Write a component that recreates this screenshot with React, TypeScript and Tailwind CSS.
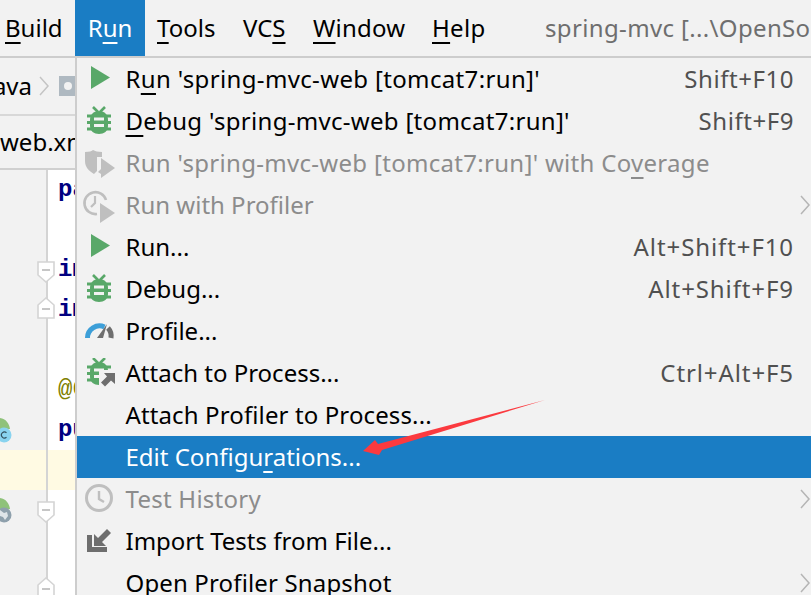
import type { ReactNode } from "react";

const GREEN = "#59a869";
const GRAY = "#bfbfbf";

function PlayIcon() {
  return (
    <svg width="30" height="30" viewBox="0 0 30 30">
      <polygon points="6,2 25,13.500 6,25" fill={GREEN} />
    </svg>
  );
}

function BugIcon({ attach }: { attach?: boolean }) {
  return (
    <svg width="30" height="30" viewBox="0 0 30 30">
      <g transform={attach ? "translate(0,-1)" : undefined}>
        <path d="M8 1l5 5M20 1l-5 5" stroke={GREEN} strokeWidth="2.600" fill="none" />
        <path d="M2 10h24M2 16.500h24M2 23h24" stroke={GREEN} strokeWidth="3.200" />
        <path d="M14 5c6 0 9 4 9 9v6c0 5-4 8-9 8s-9-3-9-8v-6c0-5 3-9 9-9z" fill={GREEN} />
        <path d="M9 13h10M9 19.500h10" stroke="#f2f2f2" strokeWidth="2.800" />
      </g>
      {attach && (
        <>
          <rect x="14" y="12" width="16" height="18" fill="#f2f2f2" />
          <path d="M19 15h11v11l-4-3.500-6 6-4-4 6-6z" fill="#6e6e6e" />
        </>
      )}
    </svg>
  );
}

function CoverageIcon() {
  return (
    <svg width="30" height="30" viewBox="0 0 30 30">
      <path d="M0 4c4 0 7-1 8-2 2 1 5 2 9 2v5h-5v14l-3 3c-5-3-9-7-9-13z" fill={GRAY} />
      <path d="M13 24l3-3v5z" fill={GRAY} />
      <polygon points="16,10 30,20 16,30" fill={GRAY} />
    </svg>
  );
}

function ProfilerIcon() {
  return (
    <svg className="overflow-visible" width="30" height="30" viewBox="0 0 30 30">
      <path d="M21 10a11 11 0 1 0-9 14" stroke={GRAY} strokeWidth="2.600" fill="none" />
      <path d="M10 6v7l-4 4" stroke={GRAY} strokeWidth="2.200" fill="none" />
      <polygon points="15,13 30,23 15,33" fill={GRAY} />
    </svg>
  );
}

function GaugeIcon() {
  return (
    <svg width="30" height="30" viewBox="0 0 30 30">
      <path d="M2.500 22a12 12 0 0 1 17-11" stroke="#3d9fd8" strokeWidth="5" fill="none" />
      <path d="M23 12a12 12 0 0 1 3 10" stroke="#6e6e6e" strokeWidth="5" fill="none" />
      <path d="M22 8l-4 14h-6z" fill="#6e6e6e" />
    </svg>
  );
}

function ClockIcon() {
  return (
    <svg width="30" height="30" viewBox="0 0 30 30">
      <circle cx="14" cy="14" r="12.500" stroke={GRAY} strokeWidth="3" fill="none" />
      <path d="M14 7v8l5 3" stroke={GRAY} strokeWidth="2.400" fill="none" />
    </svg>
  );
}

function ImportIcon() {
  return (
    <svg width="30" height="30" viewBox="0 0 30 30">
      <path d="M2 9h5v12h15v5H2z" fill="#6e6e6e" />
      <path d="M9 8l4 4 9-9 4 4-9 9 4 4H9z" fill="#6e6e6e" />
    </svg>
  );
}

function Chevron({ color = "#b5b5b5" }: { color?: string }) {
  return (
    <svg width="10" height="20" viewBox="0 0 10 20">
      <path d="M1 1l8 9-8 9" stroke={color} strokeWidth="1.500" fill="none" />
    </svg>
  );
}

function U({ children }: { children: ReactNode }) {
  return <span className="underline decoration-2 underline-offset-[5px] [text-decoration-skip-ink:none]">{children}</span>;
}

function Row({ icon, children, shortcut, sub, disabled, active, textClass = "", keyClass = "" }: {
  icon?: ReactNode;
  children: ReactNode;
  shortcut?: string;
  sub?: boolean;
  disabled?: boolean;
  active?: boolean;
  textClass?: string;
  keyClass?: string;
}) {
  return (
    <div className={`flex h-[42px] shrink-0 items-center ${active ? "bg-[#1a7dc4] text-white" : disabled ? "text-[#8c8c8c]" : "text-black"}`}>
      <div className="flex w-[48.500px] shrink-0 items-center pl-[8px]">{icon}</div>
      <div className={`flex-1 whitespace-nowrap ${textClass}`}>{children}</div>
      {shortcut && <div className={`mr-[17px] whitespace-nowrap text-[#505050] ${keyClass}`}>{shortcut}</div>}
      {sub && <div className="mr-[1px] flex items-center"><Chevron /></div>}
    </div>
  );
}

function FoldMark({ up }: { up?: boolean }) {
  return (
    <svg className={`absolute left-[37px] top-1/2 ${up ? "-mt-[13px]" : "-mt-[9px]"}`} width="18" height="22" viewBox="0 0 18 22">
      <path
        d={up ? "M1 8l8-7 8 7v13H1z" : "M1 1h16v13l-8 7-8-7z"}
        fill="#fff"
        stroke="#d4d4d4"
        strokeWidth="1.600"
      />
      <path d={up ? "M5 12h8" : "M5 9h8"} stroke="#b8b8b8" strokeWidth="1.600" />
    </svg>
  );
}

function GutterIcon({ globe }: { globe?: boolean }) {
  return (
    <svg className="absolute left-0 top-[8px]" width="12" height="26" viewBox="0 0 12 26">
      <path d="M0 0c6 1 9 5 10 11H0z" fill="#8fc27a" />
      <circle cx="4" cy="17" r="7.500" fill={globe ? "#8ea0ac" : "#89d3ef"} />
      {globe ? (
        <path d="M0 12l4 3 3-1 1 4-3 4-2-3-3-1z" fill="#dfe5e9" />
      ) : (
        <path d="M6.500 14.800a3 3 0 1 0 0 4.400" stroke="#33525f" strokeWidth="1.200" fill="none" />
      )}
    </svg>
  );
}

function CodeRow({ children, mark, up, icon, globe, highlight }: {
  children?: ReactNode;
  mark?: boolean;
  up?: boolean;
  icon?: boolean;
  globe?: boolean;
  highlight?: boolean;
}) {
  return (
    <div className={`relative flex h-[40px] shrink-0 ${highlight ? "bg-[#fffae3]" : ""}`}>
      <div className="w-[48px] shrink-0 border-r-2 border-[#d4d4d4]" />
      <div className={`flex flex-1 items-center pl-[10px] font-['Liberation_Mono',monospace] text-[24px] font-bold ${highlight ? "" : "bg-white"}`}>
        {children}
      </div>
      {mark && <FoldMark up={up} />}
      {icon && <GutterIcon globe={globe} />}
    </div>
  );
}

export default function App() {
  return (
    <div className="relative flex h-[595px] w-[811px] flex-col overflow-hidden bg-[#f2f2f2] font-['Noto_Sans',sans-serif] text-[24px] leading-none">
      {/* menu bar */}
      <div className="flex h-[58px] shrink-0 items-center overflow-hidden whitespace-nowrap border-b-2 border-[#cdcdcd] text-black">
        <div className="w-[75px] shrink-0 pl-[5px]"><U>B</U>uild</div>
        <div className="flex h-full w-[70px] shrink-0 items-center justify-center bg-[#1a7dc4] text-white">R<U>u</U>n</div>
        <div className="ml-[12px] w-[86px] shrink-0"><U>T</U>ools</div>
        <div className="w-[70px] shrink-0">VC<U>S</U></div>
        <div className="w-[119px] shrink-0 tracking-[0.2px]"><U>W</U>indow</div>
        <div className="w-[113px] shrink-0 tracking-[0.3px]"><U>H</U>elp</div>
        <div className="tracking-[0.35px] text-[#6e6e6e]">spring-mvc [...\OpenSource\spring-mvc]</div>
      </div>

      <div className="flex min-h-0 flex-1">
        {/* editor behind the menu */}
        <div className="flex w-[75px] shrink-0 flex-col overflow-hidden">
          <div className="flex h-[58px] shrink-0 items-center whitespace-nowrap border-b-2 border-[#d8d8d8]">
            <div className="flex w-[32px] shrink-0 justify-end"><span>ava</span></div>
            <div className="ml-[7px] flex shrink-0 items-center"><Chevron color="#c4c4c4" /></div>
            <svg className="ml-[10px] shrink-0" width="16" height="22" viewBox="0 0 16 22">
              <path d="M0 1h16v20H0z" fill="#afb9c1" />
              <circle cx="9" cy="11" r="4" fill="#f2f2f2" />
            </svg>
          </div>
          <div className="flex h-[54px] shrink-0 items-center overflow-hidden whitespace-nowrap border-b-2 border-[#d0d0d0]">
            <span className="text-black">web.xml</span>
          </div>
          <CodeRow><span className="text-[#000080]">package</span></CodeRow>
          <CodeRow />
          <CodeRow mark><span className="text-[#000080]">import</span></CodeRow>
          <CodeRow mark up><span className="text-[#000080]">import</span></CodeRow>
          <CodeRow />
          <CodeRow><span className="font-normal text-[#808000]">@Controller</span></CodeRow>
          <CodeRow icon><span className="text-[#000080]">public</span></CodeRow>
          <CodeRow highlight />
          <CodeRow mark icon globe />
          <CodeRow />
          <CodeRow mark up />
        </div>

        {/* Run menu */}
        <div className="flex min-w-0 flex-1 flex-col overflow-hidden border-l-2 border-[#cdcdcd]">
          <Row icon={<PlayIcon />} shortcut="Shift+F10" textClass="tracking-[0.35px]" keyClass="tracking-[0.55px]">R<U>u</U>n 'spring-mvc-web [tomcat7:run]'</Row>
          <Row icon={<BugIcon />} shortcut="Shift+F9" textClass="tracking-[0.3px]" keyClass="tracking-[0.55px]"><U>D</U>ebug 'spring-mvc-web [tomcat7:run]'</Row>
          <Row icon={<CoverageIcon />} disabled textClass="tracking-[0.3px]">Run 'spring-mvc-web [tomcat7:run]' with Co<U>v</U>erage</Row>
          <Row icon={<ProfilerIcon />} disabled sub>Run with Profiler</Row>
          <Row icon={<PlayIcon />} shortcut="Alt+Shift+F10" keyClass="tracking-[0.9px]">Run...</Row>
          <Row icon={<BugIcon />} shortcut="Alt+Shift+F9" keyClass="tracking-[0.9px]">Debug...</Row>
          <Row icon={<GaugeIcon />}>Profile...</Row>
          <Row icon={<BugIcon attach />} shortcut="Ctrl+Alt+F5" keyClass="tracking-[0.9px]">Attach to Process...</Row>
          <Row textClass="tracking-[0.12px]">Attach Profiler to Process...</Row>
          <Row active>Edit Configu<U>r</U>ations...</Row>
          <Row icon={<ClockIcon />} disabled sub textClass="tracking-[0.25px]">Test History</Row>
          <Row icon={<ImportIcon />}>Import Tests from File...</Row>
          <Row sub textClass="tracking-[0.15px]">Open Profiler Snapshot</Row>
        </div>
      </div>

      {/* red annotation arrow */}
      <svg className="absolute left-0 top-0" width="811" height="595" viewBox="0 0 811 595">
        <polygon points="545,400 382,450 379,455 363,451 375,440 378,444" fill="#fb3a3f" />
      </svg>
    </div>
  );
}
